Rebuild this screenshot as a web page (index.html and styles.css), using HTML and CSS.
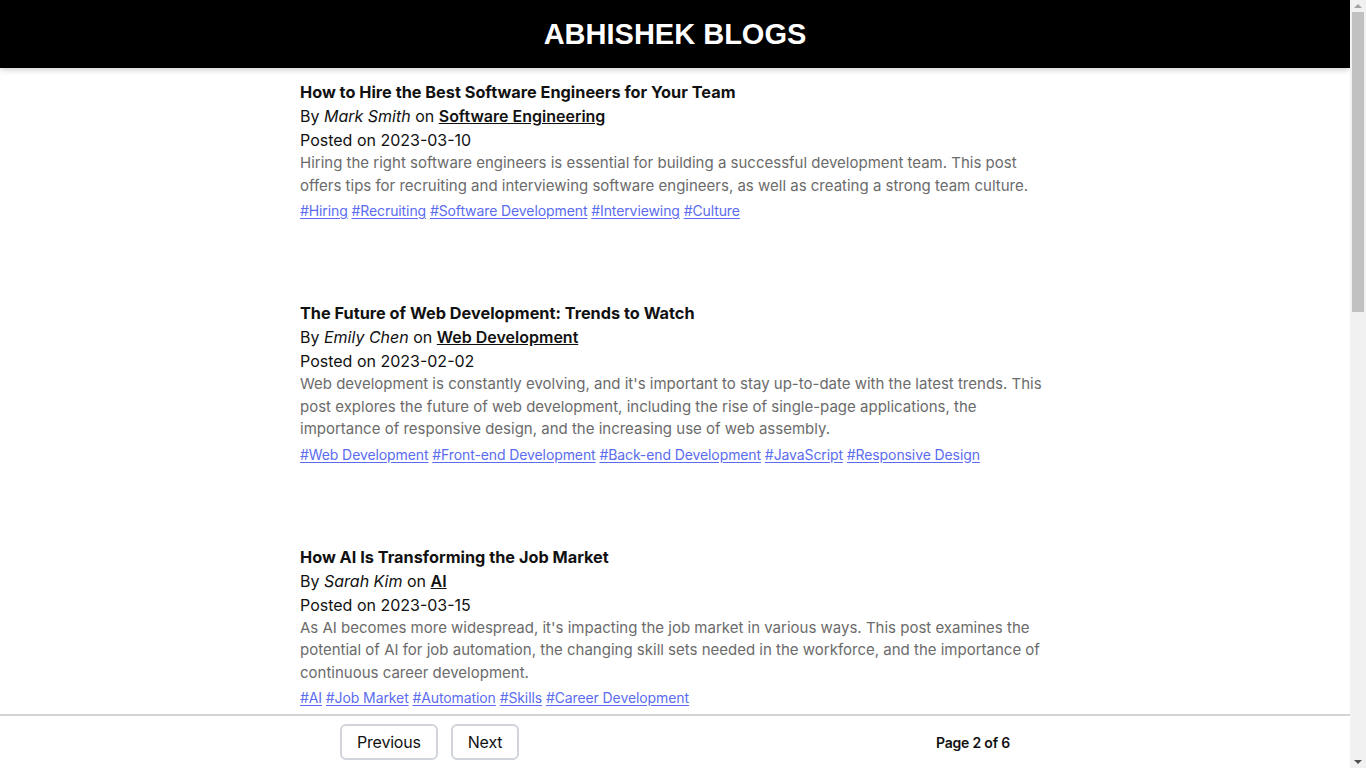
FILE: index.html
```html
<!DOCTYPE html>
<html lang="en">
<head>
<meta charset="utf-8">
<title>Abhishek Blogs</title>
<link rel="stylesheet" href="styles.css">
</head>
<body>
<div class="page">
  <header class="site-header">
    <h1 class="site-title">ABHISHEK BLOGS</h1>
  </header>
  <main class="posts">
    <article class="post">
      <h2 class="post-title">How to Hire the Best Software Engineers for Your Team</h2>
      <p class="post-by">By <em>Mark Smith</em> on <a class="post-cat" href="#">Software Engineering</a></p>
      <p class="post-date">Posted on 2023-03-10</p>
      <p class="post-desc">Hiring the right software engineers is essential for building a successful development team. This post offers tips for recruiting and interviewing software engineers, as well as creating a strong team culture.</p>
      <p class="post-tags"><a href="#">#Hiring</a> <a href="#">#Recruiting</a> <a href="#">#Software Development</a> <a href="#">#Interviewing</a> <a href="#">#Culture</a></p>
    </article>
    <article class="post">
      <h2 class="post-title">The Future of Web Development: Trends to Watch</h2>
      <p class="post-by">By <em>Emily Chen</em> on <a class="post-cat" href="#">Web Development</a></p>
      <p class="post-date">Posted on 2023-02-02</p>
      <p class="post-desc">Web development is constantly evolving, and it's important to stay up-to-date with the latest trends. This post explores the future of web development, including the rise of single-page applications, the importance of responsive design, and the increasing use of web assembly.</p>
      <p class="post-tags"><a href="#">#Web Development</a> <a href="#">#Front-end Development</a> <a href="#">#Back-end Development</a> <a href="#">#JavaScript</a> <a href="#">#Responsive Design</a></p>
    </article>
    <article class="post">
      <h2 class="post-title">How AI Is Transforming the Job Market</h2>
      <p class="post-by">By <em>Sarah Kim</em> on <a class="post-cat" href="#">AI</a></p>
      <p class="post-date">Posted on 2023-03-15</p>
      <p class="post-desc">As AI becomes more widespread, it's impacting the job market in various ways. This post examines the potential of AI for job automation, the changing skill sets needed in the workforce, and the importance of continuous career development.</p>
      <p class="post-tags"><a href="#">#AI</a> <a href="#">#Job Market</a> <a href="#">#Automation</a> <a href="#">#Skills</a> <a href="#">#Career Development</a></p>
    </article>
  </main>
  <footer class="pager">
    <div class="pager-inner">
      <div class="pager-buttons">
        <button class="pager-btn" type="button">Previous</button>
        <button class="pager-btn" type="button">Next</button>
      </div>
      <span class="pager-info">Page 2 of 6</span>
    </div>
  </footer>
</div>
<div class="scrollbar" aria-hidden="true">
  <span class="scroll-arrow scroll-up"></span>
  <span class="scroll-track"><span class="scroll-thumb"></span></span>
  <span class="scroll-arrow scroll-down"></span>
</div>
</body>
</html>
```

FILE: styles.css
```css
* { box-sizing: border-box; }

html, body {
  margin: 0;
  padding: 0;
}

body {
  font-family: Inter, "Noto Sans", sans-serif;
  color: #111;
  background: #fff;
}

.page {
  margin-right: 16px;
  padding-bottom: 80px;
}

.site-header {
  background: #000;
  height: 68px;
  display: flex;
  align-items: center;
  justify-content: center;
  box-shadow: 0 2px 6px rgba(0, 0, 0, 0.18);
  position: relative;
  z-index: 1;
}

.site-title {
  margin: 0;
  color: #fff;
  font-family: "Liberation Sans", Arial, sans-serif;
  font-size: 29px;
  font-weight: 700;
}

.posts {
  max-width: 750px;
  margin: 0 auto;
  padding-top: 12px;
}

.post {
  margin-bottom: 80px;
}

.post p { margin: 0; }

.post-title {
  margin: 0;
  font-size: 16.3px;
  line-height: 24px;
  font-weight: 700;
  color: #111;
}

.post-by,
.post-date {
  font-size: 16px;
  line-height: 24px;
  color: #111;
}

.post-cat {
  color: #111;
  font-weight: 600;
  text-decoration: underline;
}

.post-desc {
  font-size: 15px;
  line-height: 22.5px;
  color: #6b6b6b;
}

.post-tags {
  font-size: 14px;
  line-height: 21px;
  margin-top: 3px !important;
  letter-spacing: -0.1px;
}

.post-tags a {
  color: #5b6cf0;
  text-decoration: underline;
  text-underline-offset: 2px;
}

.pager {
  position: fixed;
  left: 0;
  right: 16px;
  bottom: 0;
  height: 54px;
  background: #fff;
  border-top: 2px solid #d4d4d8;
  z-index: 2;
}

.pager-inner {
  max-width: 750px;
  height: 100%;
  margin: 0 auto;
  padding: 0 40px;
  display: flex;
  align-items: center;
  justify-content: space-between;
}

.pager-buttons {
  display: flex;
  gap: 13px;
}

.pager-btn {
  font-family: Inter, "Noto Sans", sans-serif;
  font-size: 16px;
  letter-spacing: -0.2px;
  color: #111;
  background: #fff;
  border: 2px solid #d1d5db;
  border-radius: 6px;
  height: 36px;
  padding: 0 15px;
  cursor: pointer;
}

.pager-info {
  font-size: 14px;
  font-weight: 600;
  letter-spacing: -0.2px;
  color: #111;
}

/* decorative window scrollbar */
.scrollbar {
  position: fixed;
  top: 0;
  right: 0;
  bottom: 0;
  width: 16px;
  background: #f1f1f1;
  display: flex;
  flex-direction: column;
  align-items: center;
  z-index: 3;
}

.scroll-arrow {
  height: 12px;
  width: 100%;
  display: flex;
  align-items: center;
  justify-content: center;
}

.scroll-arrow::before {
  content: "";
  width: 0;
  height: 0;
  border-left: 4px solid transparent;
  border-right: 4px solid transparent;
}

.scroll-up::before {
  border-bottom: 4px solid #a3a3a3;
}

.scroll-down::before {
  border-top: 4px solid #505050;
}

.scroll-track {
  flex: 1;
  width: 100%;
  padding: 0 2px;
}

.scroll-thumb {
  display: block;
  height: 300px;
  background: #c1c1c1;
}
```
